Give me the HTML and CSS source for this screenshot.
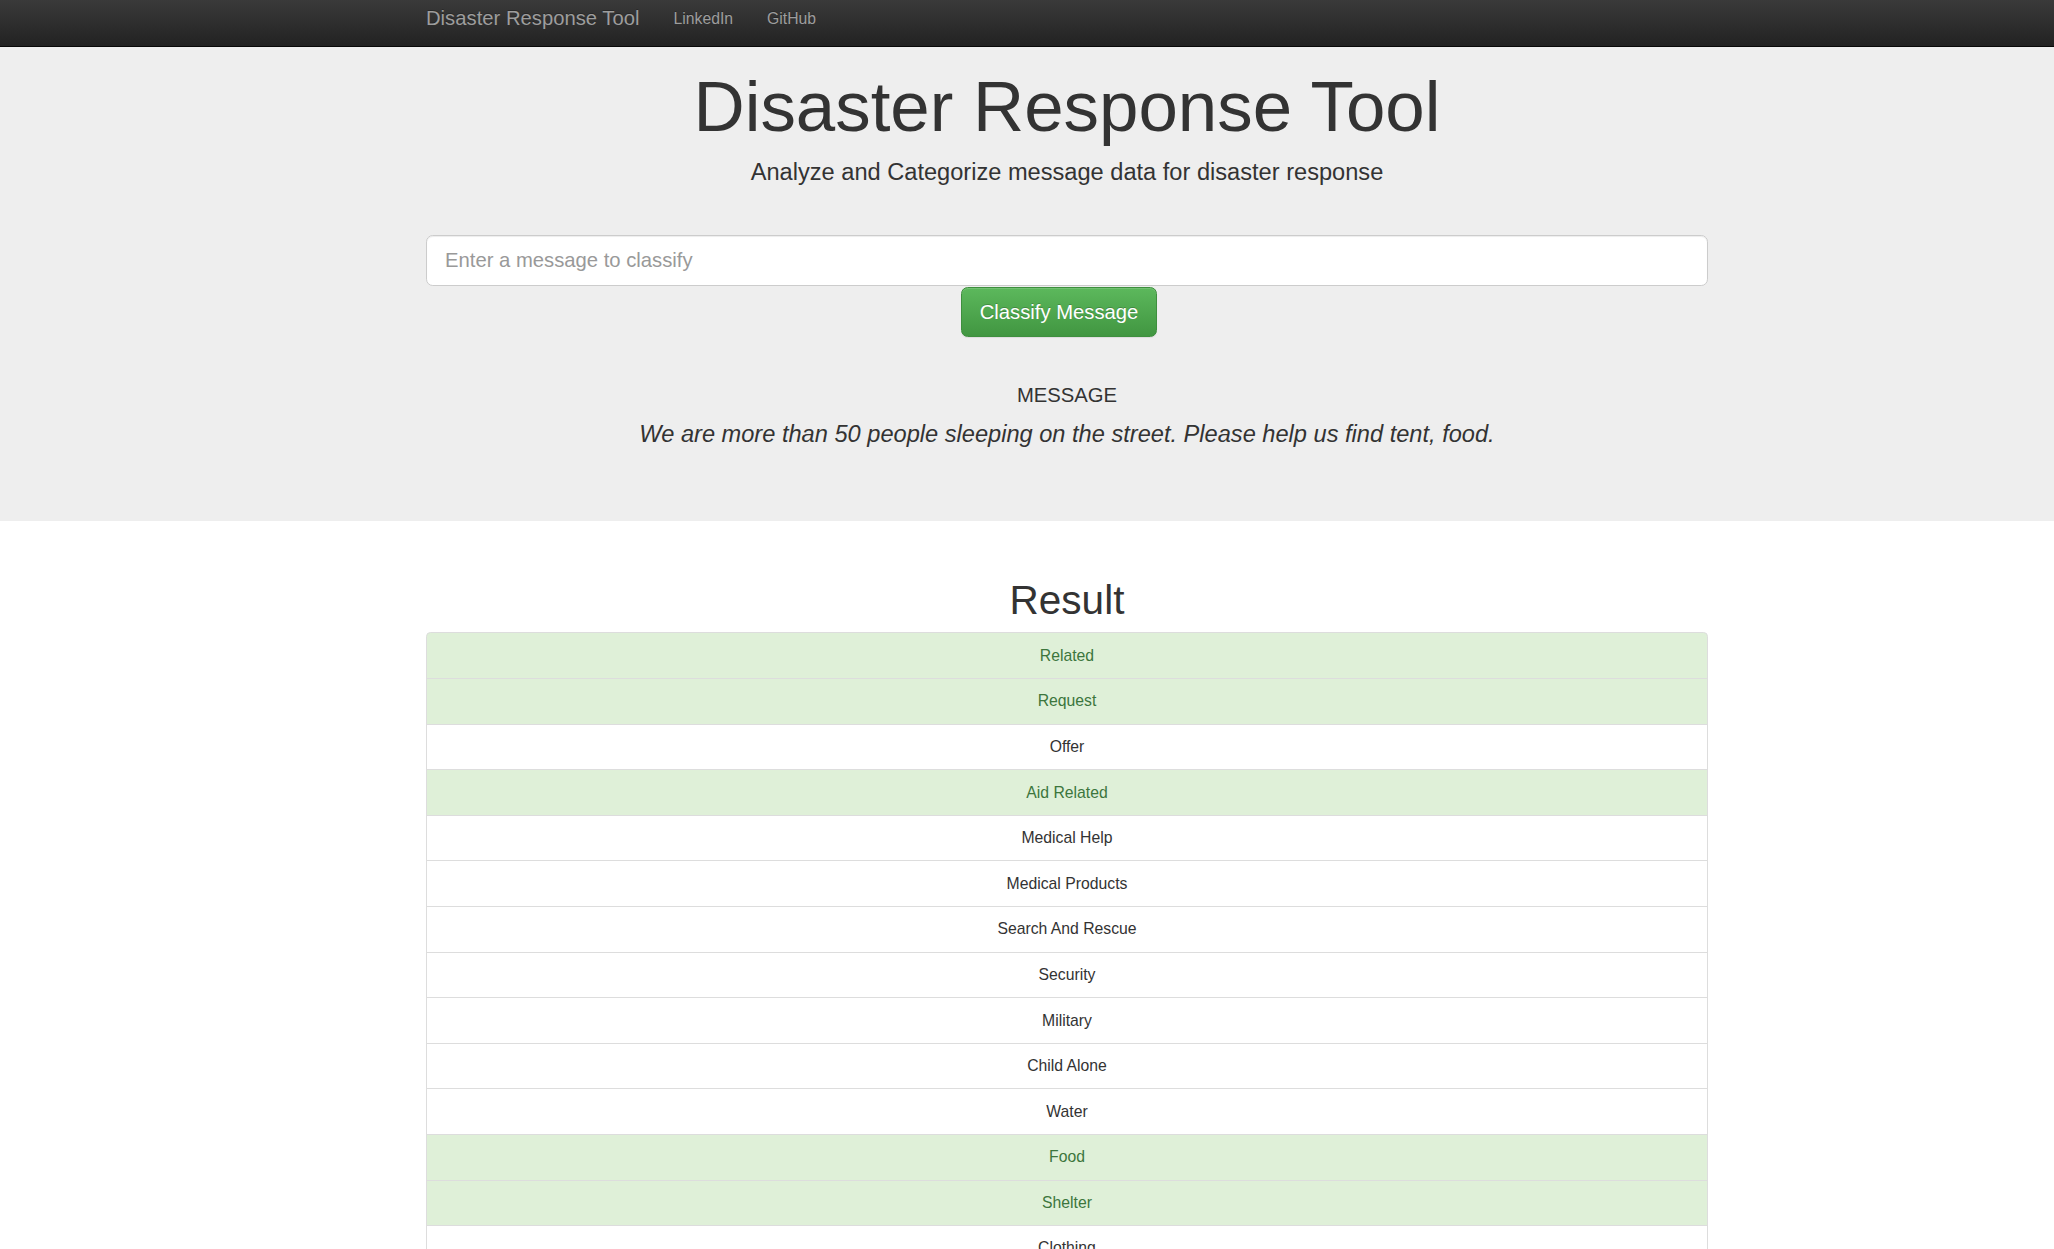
FILE: index.html
```html
<!DOCTYPE html>
<html lang="en">
<head>
<meta charset="utf-8">
<title>Disaster Response Tool</title>
<link rel="stylesheet" href="styles.css">
</head>
<body>
<nav class="navbar">
  <div class="container nav-inner">
    <a class="brand" href="#">Disaster Response Tool</a>
    <a class="nav-link" href="#">LinkedIn</a>
    <a class="nav-link" href="#">GitHub</a>
  </div>
</nav>
<header class="jumbotron">
  <div class="container">
    <h1 class="title">Disaster Response Tool</h1>
    <p class="lead">Analyze and Categorize message data for disaster response</p>
    <form class="classify-form">
      <input class="form-input" type="text" placeholder="Enter a message to classify">
      <div class="btn-row">
        <button class="btn-success" type="button">Classify Message</button>
      </div>
    </form>
    <h4 class="msg-label">MESSAGE</h4>
    <p class="msg-text"><i>We are more than 50 people sleeping on the street. Please help us find tent, food.</i></p>
  </div>
</header>
<main class="container">
  <h1 class="result-title">Result</h1>
  <ul class="list-group">
    <li class="item success">Related</li>
    <li class="item success">Request</li>
    <li class="item">Offer</li>
    <li class="item success">Aid Related</li>
    <li class="item">Medical Help</li>
    <li class="item">Medical Products</li>
    <li class="item">Search And Rescue</li>
    <li class="item">Security</li>
    <li class="item">Military</li>
    <li class="item">Child Alone</li>
    <li class="item">Water</li>
    <li class="item success">Food</li>
    <li class="item success">Shelter</li>
    <li class="item">Clothing</li>
    <li class="item">Money</li>
    <li class="item">Missing People</li>
    <li class="item">Refugees</li>
    <li class="item">Death</li>
    <li class="item">Other Aid</li>
    <li class="item">Infrastructure Related</li>
    <li class="item">Transport</li>
    <li class="item">Buildings</li>
    <li class="item">Electricity</li>
    <li class="item">Tools</li>
    <li class="item">Hospitals</li>
    <li class="item">Shops</li>
    <li class="item">Aid Centers</li>
    <li class="item">Other Infrastructure</li>
    <li class="item">Weather Related</li>
    <li class="item">Floods</li>
    <li class="item">Storm</li>
    <li class="item">Fire</li>
    <li class="item">Earthquake</li>
    <li class="item">Cold</li>
    <li class="item">Other Weather</li>
    <li class="item success">Direct Report</li>
  </ul>
</main>
</body>
</html>
```
FILE: styles.css
```css
* { box-sizing: border-box; }
html, body { margin: 0; padding: 0; }
body {
  font-family: "Liberation Sans", Arial, Helvetica, sans-serif;
  font-size: 15.75px;
  line-height: 22.5px;
  color: #333;
  background: #fff;
}
.container {
  width: 1282px;
  margin-left: 426px;
}
.navbar {
  height: 47px;
  background: linear-gradient(to bottom, #3a3a3a 0, #222 100%);
  border-bottom: 1px solid #080808;
}
.nav-inner {
  display: flex;
  align-items: flex-start;
  height: 46px;
}
.brand, .nav-link {
  color: #9d9d9d;
  text-decoration: none;
  line-height: 37px;
  text-shadow: 0 -1px 0 rgba(0,0,0,.25);
}
.brand {
  font-size: 20.25px;
  padding-right: 17px;
}
.nav-link {
  font-size: 15.75px;
  padding: 0 17px;
}
.jumbotron {
  background: #eee;
  padding: 21px 0 70px;
}
.title {
  margin: 0;
  font-size: 70.875px;
  line-height: 78px;
  font-weight: 500;
  text-align: center;
  color: #333;
}
.lead {
  margin: 10.3px 0 0;
  font-size: 23.625px;
  line-height: 33.75px;
  text-align: center;
}
.classify-form {
  margin-top: 45.2px;
}
.form-input {
  display: block;
  width: 100%;
  height: 51px;
  padding: 0 18px;
  font-family: inherit;
  font-size: 20.25px;
  color: #555;
  background: #fff;
  border: 1px solid #ccc;
  border-radius: 6.75px;
  box-shadow: inset 0 1px 1px rgba(0,0,0,.075);
  outline: none;
}
.form-input::placeholder { color: #999; }
.btn-row {
  display: flex;
  justify-content: center;
  margin-top: 1px;
}
.btn-success {
  margin-right: 16px;
  height: 50px;
  padding: 0 18px;
  font-family: inherit;
  font-size: 20.25px;
  color: #fff;
  text-shadow: 0 -1px 0 rgba(0,0,0,.2);
  background: linear-gradient(to bottom, #5cb85c 0, #419641 100%);
  border: 1px solid #3e8f3e;
  border-radius: 6.75px;
  box-shadow: inset 0 1px 0 rgba(255,255,255,.15), 0 1px 1px rgba(0,0,0,.075);
  cursor: pointer;
}
.msg-label {
  margin: 47px 0 0;
  font-size: 20.25px;
  line-height: 22px;
  font-weight: 500;
  text-align: center;
}
.msg-text {
  margin: 11.5px 0 0;
  font-size: 23.625px;
  line-height: 33.75px;
  text-align: center;
}
.result-title {
  margin: 56.3px 0 10.2px;
  font-size: 40.5px;
  line-height: 44.5px;
  font-weight: 500;
  text-align: center;
}
.list-group {
  list-style: none;
  margin: 0 0 22px;
  padding: 0;
}
.item {
  padding: 11.3px 17px;
  line-height: 22px;
  text-align: center;
  background: #fff;
  border: 1px solid #ddd;
  margin-bottom: -1px;
  color: #333;
}
.item:first-child {
  border-top-left-radius: 4.5px;
  border-top-right-radius: 4.5px;
}
.item.success {
  background: #dff0d8;
  color: #3c763d;
}
```
